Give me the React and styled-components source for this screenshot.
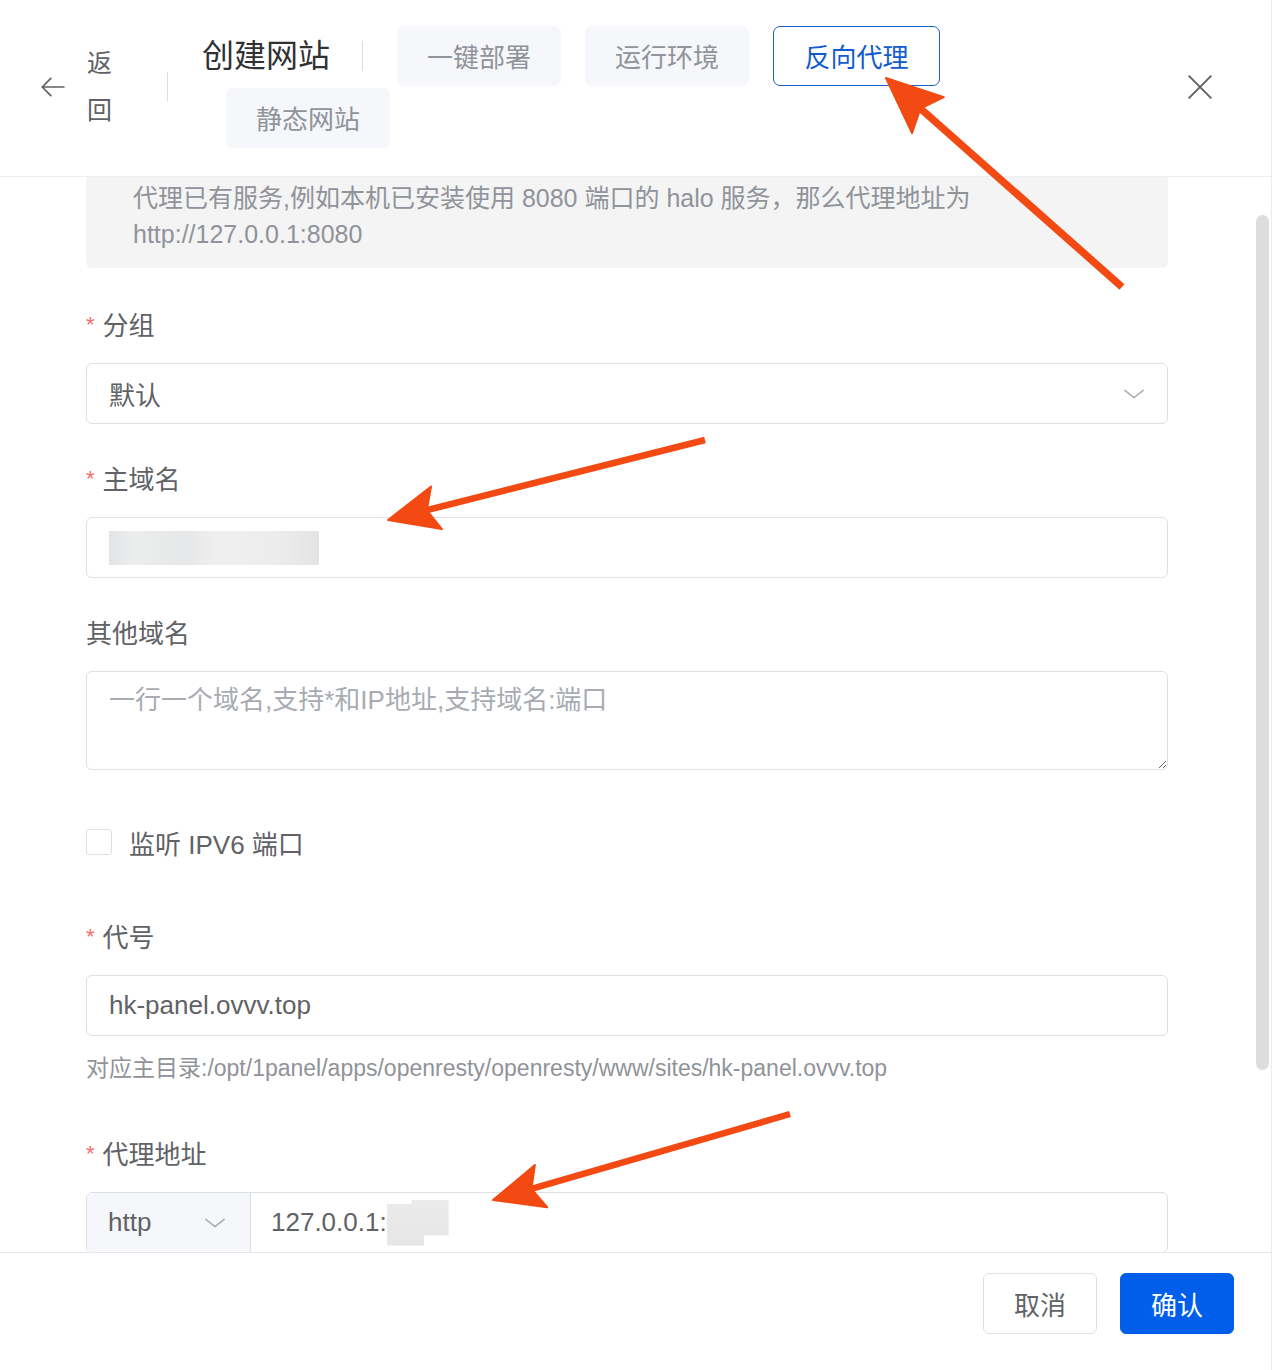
import React from 'react';
import styled, { createGlobalStyle } from 'styled-components';

const GlobalStyle = createGlobalStyle`
    html, body {
        margin: 0;
        padding: 0;
        background: #ffffff;
    }
    * {
        box-sizing: border-box;
    }
`;

const FONT = `"Liberation Sans", "Noto Sans CJK SC", sans-serif`;

const Page = styled.div`
    position: relative;
    width: 1277px;
    height: 1370px;
    overflow: hidden;
    font-family: ${FONT};
    background: #ffffff;
`;

const Drawer = styled.div`
    width: 1272px;
    height: 1370px;
    display: flex;
    flex-direction: column;
    background: #ffffff;
    border-right: 1px solid #ececec;
`;

const Header = styled.div`
    height: 177px;
    flex: 0 0 177px;
    display: flex;
    align-items: center;
    padding: 0 58px 3px 40px;
    border-bottom: 1px solid #ebeef5;
`;

const BackButton = styled.div`
    display: flex;
    align-items: center;
    gap: 21px;
    color: #606266;
    svg {
        flex: 0 0 auto;
    }
`;

const BackText = styled.div`
    width: 26px;
    font-size: 25px;
    line-height: 47px;
    color: #606266;
`;

const Divider = styled.div`
    width: 1px;
    height: 30px;
    background: #dcdfe6;
    margin: ${(p) => p.$margin || '0'};
`;

const HeaderContent = styled.div`
    width: 780px;
    display: flex;
    flex-wrap: wrap;
    align-items: center;
    row-gap: 2px;
`;

const Title = styled.div`
    font-size: 32px;
    line-height: 44px;
    color: #303133;
`;

const Tab = styled.div`
    width: ${(p) => (p.$active ? '167px' : '164px')};
    height: 60px;
    margin-left: 24px;
    display: flex;
    align-items: center;
    justify-content: center;
    border-radius: 7px;
    font-size: 26px;
    background: ${(p) => (p.$active ? '#ffffff' : '#f5f7fa')};
    border: 1px solid ${(p) => (p.$active ? '#1e5fc9' : '#f5f7fa')};
    color: ${(p) => (p.$active ? '#125bcf' : '#909399')};
`;

const CloseButton = styled.div`
    margin-left: auto;
    display: flex;
    color: #606266;
`;

const Body = styled.div`
    position: relative;
    flex: 1 1 auto;
    overflow: hidden;
    padding: 0 103px 0 86px;
`;

const Scrollbar = styled.div`
    position: absolute;
    right: 2px;
    top: 38px;
    width: 13px;
    height: 855px;
    border-radius: 7px;
    background: #dddddd;
`;

const Alert = styled.div`
    background: #f4f4f5;
    border-radius: 0 0 6px 6px;
    padding: 3px 40px 16px 47px;
    font-size: 25px;
    line-height: 36px;
    color: #909399;
`;

const FormItem = styled.div`
    margin-top: ${(p) => p.$top || '37px'};
`;

const Label = styled.div`
    display: flex;
    align-items: center;
    height: 36px;
    font-size: 26px;
    color: #606266;
    margin-bottom: 20px;
    line-height: 32px;
    padding-top: 1px;
`;

const Required = styled.span`
    color: #f56c6c;
    font-size: 22px;
    margin-right: 8px;
    position: relative;
    top: -1px;
`;

const Field = styled.div`
    height: 61px;
    display: flex;
    align-items: center;
    padding: 0 22px;
    border: 1px solid #dcdfe6;
    border-radius: 6px;
    font-size: 26px;
    color: #606266;
    background: #ffffff;
`;

const FieldText = styled.span`
    flex: 1 1 auto;
`;

const Blur = styled.div`
    width: ${(p) => p.$w}px;
    height: ${(p) => p.$h}px;
    background: linear-gradient(90deg, #e3e4e6 0%, #eceded 12%, #e6e7e8 38%, #f0f0f1 52%, #ebebec 85%, #e2e3e4 100%);
`;

const TextArea = styled.textarea`
    display: block;
    width: 100%;
    height: 99px;
    padding: 10px 22px;
    border: 1px solid #dcdfe6;
    border-radius: 6px;
    font-family: ${FONT};
    font-size: 26px;
    line-height: 36px;
    color: #606266;
    outline: none;
    &::placeholder {
        color: #a8abb2;
    }
`;

const CheckRow = styled.label`
    height: 74px;
    display: flex;
    align-items: center;
    gap: 17px;
    font-size: 26px;
    color: #606266;
`;

const CheckBox = styled.span`
    width: 26px;
    height: 26px;
    border: 1px solid #dcdfe6;
    border-radius: 3px;
    background: #ffffff;
`;

const Help = styled.div`
    margin-top: 16px;
    font-size: 23px;
    line-height: 32px;
    color: #909399;
`;

const InputGroup = styled.div`
    height: 61px;
    display: flex;
    border: 1px solid #dcdfe6;
    border-radius: 6px;
    overflow: hidden;
    font-size: 26px;
    color: #606266;
`;

const Prepend = styled.div`
    width: 164px;
    display: flex;
    align-items: center;
    justify-content: space-between;
    padding: 0 24px 0 21px;
    background: #f5f7fa;
    border-right: 1px solid #dcdfe6;
`;

const GroupInput = styled.div`
    flex: 1 1 auto;
    display: flex;
    align-items: center;
    padding-left: 20px;
`;

const PortBlur = styled.div`
    width: 62px;
    height: 46px;
    background: linear-gradient(180deg, #ebebeb 0%, #e6e6e6 100%);
    clip-path: polygon(0 10%, 40% 10%, 40% 0, 100% 0, 100% 78%, 60% 78%, 60% 100%, 0 100%);
`;

const Footer = styled.div`
    flex: 0 0 118px;
    display: flex;
    justify-content: flex-end;
    align-items: flex-start;
    gap: 23px;
    padding: 20px 37px 0 0;
    border-top: 1px solid #e4e7ed;
`;

const Button = styled.button`
    width: 114px;
    height: 61px;
    border-radius: 6px;
    font-family: ${FONT};
    font-size: 26px;
    cursor: pointer;
    border: 1px solid ${(p) => (p.$primary ? '#005eeb' : '#dcdfe6')};
    background: ${(p) => (p.$primary ? '#005eeb' : '#ffffff')};
    color: ${(p) => (p.$primary ? '#ffffff' : '#606266')};
`;

const Annotations = styled.svg`
    position: absolute;
    left: 0;
    top: 0;
    pointer-events: none;
`;

const Chevron = ({ size = 22, color = '#a8abb2' }) => (
    <svg width={size} height={size} viewBox="0 0 24 24" fill="none" stroke={color} strokeWidth="1.6" strokeLinecap="round" strokeLinejoin="round">
        <path d="M2 8l10 8 10-8" />
    </svg>
);

const Arrow = ({ from, to, width = 6.5, head = 50, spread = 22 }) => {
    const [x1, y1] = from;
    const [x2, y2] = to;
    const len = Math.hypot(x2 - x1, y2 - y1);
    const ux = (x2 - x1) / len;
    const uy = (y2 - y1) / len;
    const nx = -uy;
    const ny = ux;
    const bx = x2 - ux * head;
    const by = y2 - uy * head;
    const notchX = x2 - ux * (head - 10);
    const notchY = y2 - uy * (head - 10);
    const pts = [
        [x2, y2],
        [bx + nx * spread, by + ny * spread],
        [notchX, notchY],
        [bx - nx * spread, by - ny * spread],
    ].map((p) => p.join(',')).join(' ');
    return (
        <g>
            <line x1={x1} y1={y1} x2={notchX} y2={notchY} stroke="#f24a12" strokeWidth={width} />
            <polygon points={pts} fill="#f24a12" stroke="#f24a12" strokeWidth="2" strokeLinejoin="round" />
        </g>
    );
};

const tabs = [
    { name: '一键部署' },
    { name: '运行环境' },
    { name: '反向代理', active: true },
    { name: '静态网站' },
];

export default function App() {
    return (
        <Page>
            <GlobalStyle />
            <Drawer>
                <Header>
                    <BackButton>
                        <svg width="26" height="26" viewBox="0 0 24 24" fill="none" stroke="currentColor" strokeWidth="1.6" strokeLinecap="round" strokeLinejoin="round">
                            <path d="M22 12H2M10 4l-8 8 8 8" />
                        </svg>
                        <BackText>返回</BackText>
                    </BackButton>
                    <Divider $margin="0 34px 0 54px" />
                    <HeaderContent>
                        <Title>创建网站</Title>
                        <Divider $margin="0 10px 0 32px" />
                        {tabs.map((t) => (
                            <Tab key={t.name} $active={t.active}>{t.name}</Tab>
                        ))}
                    </HeaderContent>
                    <CloseButton>
                        <svg width="26" height="26" viewBox="0 0 24 24" fill="none" stroke="currentColor" strokeWidth="1.8" strokeLinecap="round">
                            <path d="M2 2l20 20M22 2L2 22" />
                        </svg>
                    </CloseButton>
                </Header>

                <Body>
                    <Alert>
                        代理已有服务,例如本机已安装使用 8080 端口的 halo 服务，那么代理地址为
                        <br />
                        http://127.0.0.1:8080
                    </Alert>

                    <FormItem $top="39px">
                        <Label><Required>*</Required>分组</Label>
                        <Field>
                            <FieldText>默认</FieldText>
                            <Chevron />
                        </Field>
                    </FormItem>

                    <FormItem>
                        <Label><Required>*</Required>主域名</Label>
                        <Field>
                            <Blur $w={210} $h={34} />
                        </Field>
                    </FormItem>

                    <FormItem>
                        <Label>其他域名</Label>
                        <TextArea placeholder="一行一个域名,支持*和IP地址,支持域名:端口" />
                    </FormItem>

                    <FormItem $top="35px">
                        <CheckRow>
                            <CheckBox />
                            监听 IPV6 端口
                        </CheckRow>
                    </FormItem>

                    <FormItem $top="40px">
                        <Label><Required>*</Required>代号</Label>
                        <Field>
                            <FieldText>hk-panel.ovvv.top</FieldText>
                        </Field>
                        <Help>对应主目录:/opt/1panel/apps/openresty/openresty/www/sites/hk-panel.ovvv.top</Help>
                    </FormItem>

                    <FormItem $top="52px">
                        <Label><Required>*</Required>代理地址</Label>
                        <InputGroup>
                            <Prepend>
                                http
                                <Chevron />
                            </Prepend>
                            <GroupInput>
                                127.0.0.1:
                                <PortBlur />
                            </GroupInput>
                        </InputGroup>
                    </FormItem>

                    <Scrollbar />
                </Body>

                <Footer>
                    <Button>取消</Button>
                    <Button $primary>确认</Button>
                </Footer>
            </Drawer>

            <Annotations width="1277" height="1370" viewBox="0 0 1277 1370">
                <Arrow from={[1122, 287]} to={[886, 78]} width={7.5} head={56} spread={24} />
                <Arrow from={[705, 440]} to={[388, 520]} />
                <Arrow from={[790, 1114]} to={[493, 1200]} />
            </Annotations>
        </Page>
    );
}
